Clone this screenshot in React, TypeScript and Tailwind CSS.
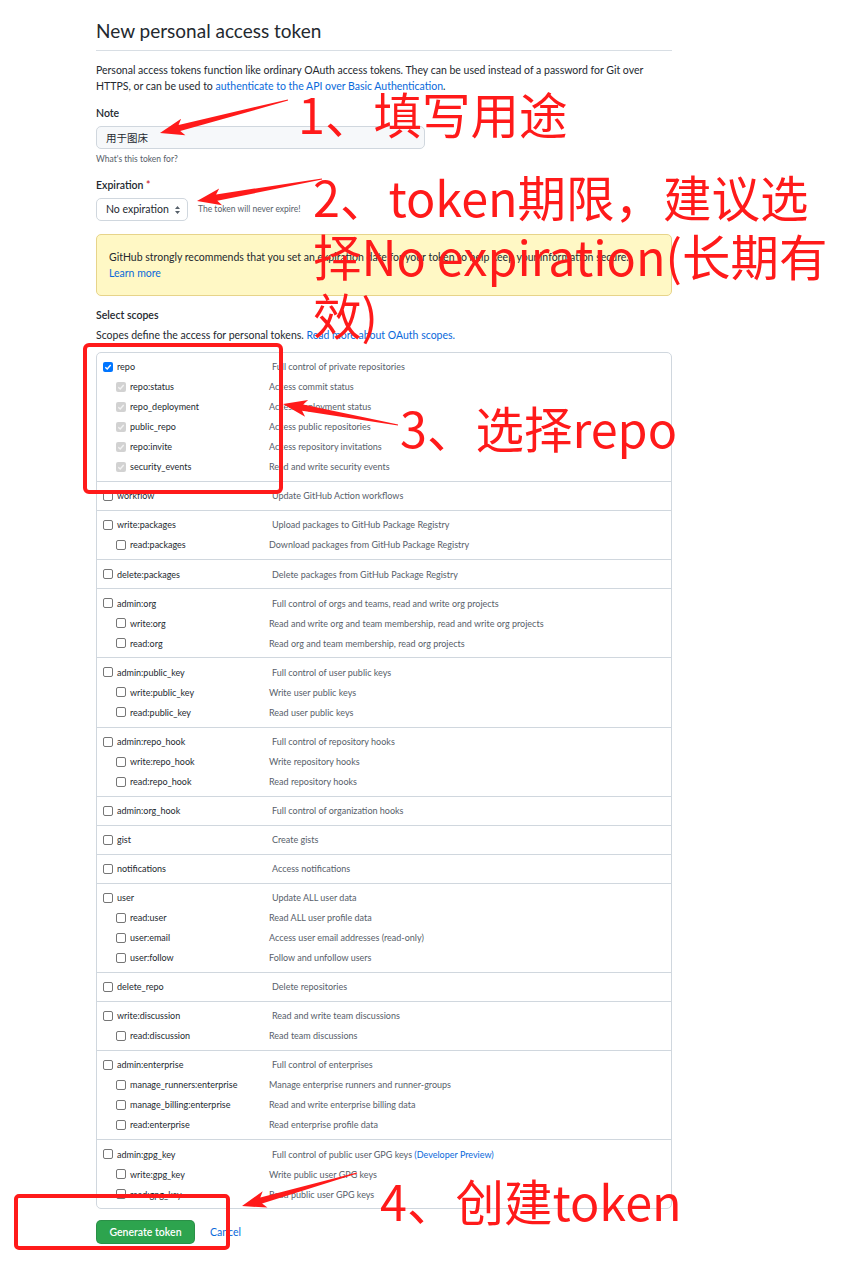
import React from 'react';

type Scope = { name: string; desc: string; sub?: boolean; checked?: boolean; disabled?: boolean; preview?: boolean };

const groups: Scope[][] = [
  [
    { name: 'repo', desc: 'Full control of private repositories', checked: true },
    { name: 'repo:status', desc: 'Access commit status', sub: true, checked: true, disabled: true },
    { name: 'repo_deployment', desc: 'Access deployment status', sub: true, checked: true, disabled: true },
    { name: 'public_repo', desc: 'Access public repositories', sub: true, checked: true, disabled: true },
    { name: 'repo:invite', desc: 'Access repository invitations', sub: true, checked: true, disabled: true },
    { name: 'security_events', desc: 'Read and write security events', sub: true, checked: true, disabled: true },
  ],
  [{ name: 'workflow', desc: 'Update GitHub Action workflows' }],
  [
    { name: 'write:packages', desc: 'Upload packages to GitHub Package Registry' },
    { name: 'read:packages', desc: 'Download packages from GitHub Package Registry', sub: true },
  ],
  [{ name: 'delete:packages', desc: 'Delete packages from GitHub Package Registry' }],
  [
    { name: 'admin:org', desc: 'Full control of orgs and teams, read and write org projects' },
    { name: 'write:org', desc: 'Read and write org and team membership, read and write org projects', sub: true },
    { name: 'read:org', desc: 'Read org and team membership, read org projects', sub: true },
  ],
  [
    { name: 'admin:public_key', desc: 'Full control of user public keys' },
    { name: 'write:public_key', desc: 'Write user public keys', sub: true },
    { name: 'read:public_key', desc: 'Read user public keys', sub: true },
  ],
  [
    { name: 'admin:repo_hook', desc: 'Full control of repository hooks' },
    { name: 'write:repo_hook', desc: 'Write repository hooks', sub: true },
    { name: 'read:repo_hook', desc: 'Read repository hooks', sub: true },
  ],
  [{ name: 'admin:org_hook', desc: 'Full control of organization hooks' }],
  [{ name: 'gist', desc: 'Create gists' }],
  [{ name: 'notifications', desc: 'Access notifications' }],
  [
    { name: 'user', desc: 'Update ALL user data' },
    { name: 'read:user', desc: 'Read ALL user profile data', sub: true },
    { name: 'user:email', desc: 'Access user email addresses (read-only)', sub: true },
    { name: 'user:follow', desc: 'Follow and unfollow users', sub: true },
  ],
  [{ name: 'delete_repo', desc: 'Delete repositories' }],
  [
    { name: 'write:discussion', desc: 'Read and write team discussions' },
    { name: 'read:discussion', desc: 'Read team discussions', sub: true },
  ],
  [
    { name: 'admin:enterprise', desc: 'Full control of enterprises' },
    { name: 'manage_runners:enterprise', desc: 'Manage enterprise runners and runner-groups', sub: true },
    { name: 'manage_billing:enterprise', desc: 'Read and write enterprise billing data', sub: true },
    { name: 'read:enterprise', desc: 'Read enterprise profile data', sub: true },
  ],
  [
    { name: 'admin:gpg_key', desc: 'Full control of public user GPG keys', preview: true },
    { name: 'write:gpg_key', desc: 'Write public user GPG keys', sub: true },
    { name: 'read:gpg_key', desc: 'Read public user GPG keys', sub: true },
  ],
];

const Checkbox = ({ checked, disabled }: { checked?: boolean; disabled?: boolean }) => {
  if (checked) {
    return (
      <span
        className={`flex h-[10px] w-[10px] shrink-0 items-center justify-center rounded-[2px] ${disabled ? 'bg-[#d2d2d2]' : 'bg-[#0075ff]'}`}
      >
        <svg width="8" height="8" viewBox="0 0 8 8">
          <path d="M1.3 4.2 L3.2 6 L6.7 2" fill="none" stroke={disabled ? '#f2f2f2' : '#fff'} strokeWidth="1.4" />
        </svg>
      </span>
    );
  }
  return <span className="h-[10px] w-[10px] shrink-0 rounded-[2px] border border-[#767676] bg-white" />;
};

// red annotation arrow, tail -> tip
const arrow = (x1: number, y1: number, x2: number, y2: number) => {
  const dx = x2 - x1;
  const dy = y2 - y1;
  const len = Math.hypot(dx, dy);
  const ux = dx / len;
  const uy = dy / len;
  const nx = -uy;
  const ny = ux;
  const bx = x2 - ux * 24;
  const by = y2 - uy * 24;
  const nb = x2 - ux * 20;
  const mb = y2 - uy * 20;
  const pts = [
    [x1 + nx * 0.6, y1 + ny * 0.6],
    [nb + nx * 3.2, mb + ny * 3.2],
    [bx + nx * 8.5, by + ny * 8.5],
    [x2, y2],
    [bx - nx * 8.5, by - ny * 8.5],
    [nb - nx * 3.2, mb - ny * 3.2],
    [x1 - nx * 0.6, y1 - ny * 0.6],
  ];
  return pts.map((p) => p.map((v) => v.toFixed(1)).join(',')).join(' ');
};

export default function App() {
  return (
    <div className="relative h-[1263px] w-[849px] overflow-hidden bg-white font-['Lato',sans-serif] text-[#24292f]">
      <div className="ml-[96px] w-[576px]">
        <h1 className="mt-[17px] border-b border-[#d8dee4] pb-[5px] text-[19px] leading-[28px] font-normal">
          New personal access token
        </h1>

        <p className="mt-[11px] text-[10.5px] leading-[16px]">
          Personal access tokens function like ordinary OAuth access tokens. They can be used instead of a password for Git over
          HTTPS, or can be used to <span className="text-[#0969da]">authenticate to the API over Basic Authentication</span>.
        </p>

        <div className="mt-[11px] text-[10.5px] leading-[16px] font-semibold">Note</div>
        <div className="mt-[5px] flex h-[23px] w-[329px] items-center rounded-[5px] border border-[#d0d7de] bg-[#f6f8fa] px-[9px] font-['Noto_Sans_CJK_SC',sans-serif] text-[10.5px]">
          用于图床
        </div>
        <div className="mt-[3px] text-[8.5px] leading-[14px] text-[#57606a]">What's this token for?</div>

        <div className="mt-[11px] text-[10.5px] leading-[16px] font-semibold">
          Expiration <span className="text-[#cf222e]">*</span>
        </div>
        <div className="mt-[5px] flex items-center">
          <div className="flex h-[23px] w-[92px] items-center justify-between rounded-[5px] border border-[#d0d7de] bg-white pr-[6px] pl-[9px] text-[10.5px]">
            <span>No expiration</span>
            <svg width="7" height="10" viewBox="0 0 7 10">
              <path d="M3.5 1 L6 4 L1 4 Z M3.5 9 L6 6 L1 6 Z" fill="#57606a" />
            </svg>
          </div>
          <span className="ml-[10px] text-[8.5px] text-[#57606a]">The token will never expire!</span>
        </div>

        <div className="mt-[13px] rounded-[5px] border border-[#e7d48a] bg-[#fff8c5] px-[12px] py-[14px] text-[10.5px] leading-[16px]">
          GitHub strongly recommends that you set an expiration date for your token to help keep your information secure.
          <br />
          <span className="text-[#0969da]">Learn more</span>
        </div>

        <div className="mt-[11px] text-[10.5px] leading-[16px] font-semibold">Select scopes</div>
        <p className="mt-[4px] text-[10.5px] leading-[16px]">
          Scopes define the access for personal tokens. <span className="text-[#0969da]">Read more about OAuth scopes.</span>
        </p>

        <div className="mt-[9px] overflow-hidden rounded-[5px] border border-[#d0d7de]">
          {groups.map((g, gi) => (
            <div key={gi} className={`pt-[4px] pb-[4.1px] ${gi > 0 ? 'border-t border-[#d0d7de]' : ''}`}>
              {g.map((s) => (
                <div key={s.name} className="flex h-[20px] items-center text-[9px]">
                  <div className={`flex items-center gap-[4px] ${s.sub ? 'w-[172px] pl-[19px]' : 'w-[175px] pl-[6px]'}`}>
                    <Checkbox checked={s.checked} disabled={s.disabled} />
                    <span>{s.name}</span>
                  </div>
                  <span className="text-[#57606a]">
                    {s.desc}
                    {s.preview && <span className="text-[#0969da]"> (Developer Preview)</span>}
                  </span>
                </div>
              ))}
            </div>
          ))}
        </div>

        <div className="mt-[11px] flex items-center gap-[15px]">
          <button className="h-[24px] w-[99px] rounded-[5px] border border-[#1b1f2426] bg-[#2da44e] text-[10.5px] font-semibold text-white">
            Generate token
          </button>
          <span className="text-[10.5px] text-[#0969da]">Cancel</span>
        </div>
      </div>

      {/* annotations */}
      <svg className="pointer-events-none absolute top-0 left-0" width="849" height="1263">
        <polygon points={arrow(288, 100, 160, 133)} fill="#ff1a1a" />
        <polygon points={arrow(322, 179, 197, 201)} fill="#ff1a1a" />
        <polygon points={arrow(398, 425, 283, 404)} fill="#ff1a1a" />
        <polygon points={arrow(357, 1173, 242, 1206)} fill="#ff1a1a" />
      </svg>
      <div className="pointer-events-none absolute top-[343px] left-[83px] h-[151px] w-[200px] rounded-[6px] border-[4px] border-[#ff1a1a]" />
      <div className="pointer-events-none absolute top-[1194px] left-[14px] h-[56px] w-[216px] rounded-[5px] border-[4px] border-[#ff1a1a]" />

      <div className="pointer-events-none absolute top-[84px] left-[298px] font-['Noto_Sans_CJK_SC',sans-serif] text-[48.5px] leading-[59px] whitespace-nowrap text-[#ff1a1a]">
        1、填写用途
      </div>
      <div className="pointer-events-none absolute top-[167px] left-[313px] font-['Noto_Sans_CJK_SC',sans-serif] text-[48.5px] leading-[59px] whitespace-nowrap text-[#ff1a1a]">
        2、token期限，建议选
        <br />
        择No expiration(长期有
        <br />
        效)
      </div>
      <div className="pointer-events-none absolute top-[398px] left-[400px] font-['Noto_Sans_CJK_SC',sans-serif] text-[48.5px] leading-[59px] whitespace-nowrap text-[#ff1a1a]">
        3、选择repo
      </div>
      <div className="pointer-events-none absolute top-[1171px] left-[380px] font-['Noto_Sans_CJK_SC',sans-serif] text-[48.5px] leading-[59px] whitespace-nowrap text-[#ff1a1a]">
        4、创建token
      </div>
    </div>
  );
}
